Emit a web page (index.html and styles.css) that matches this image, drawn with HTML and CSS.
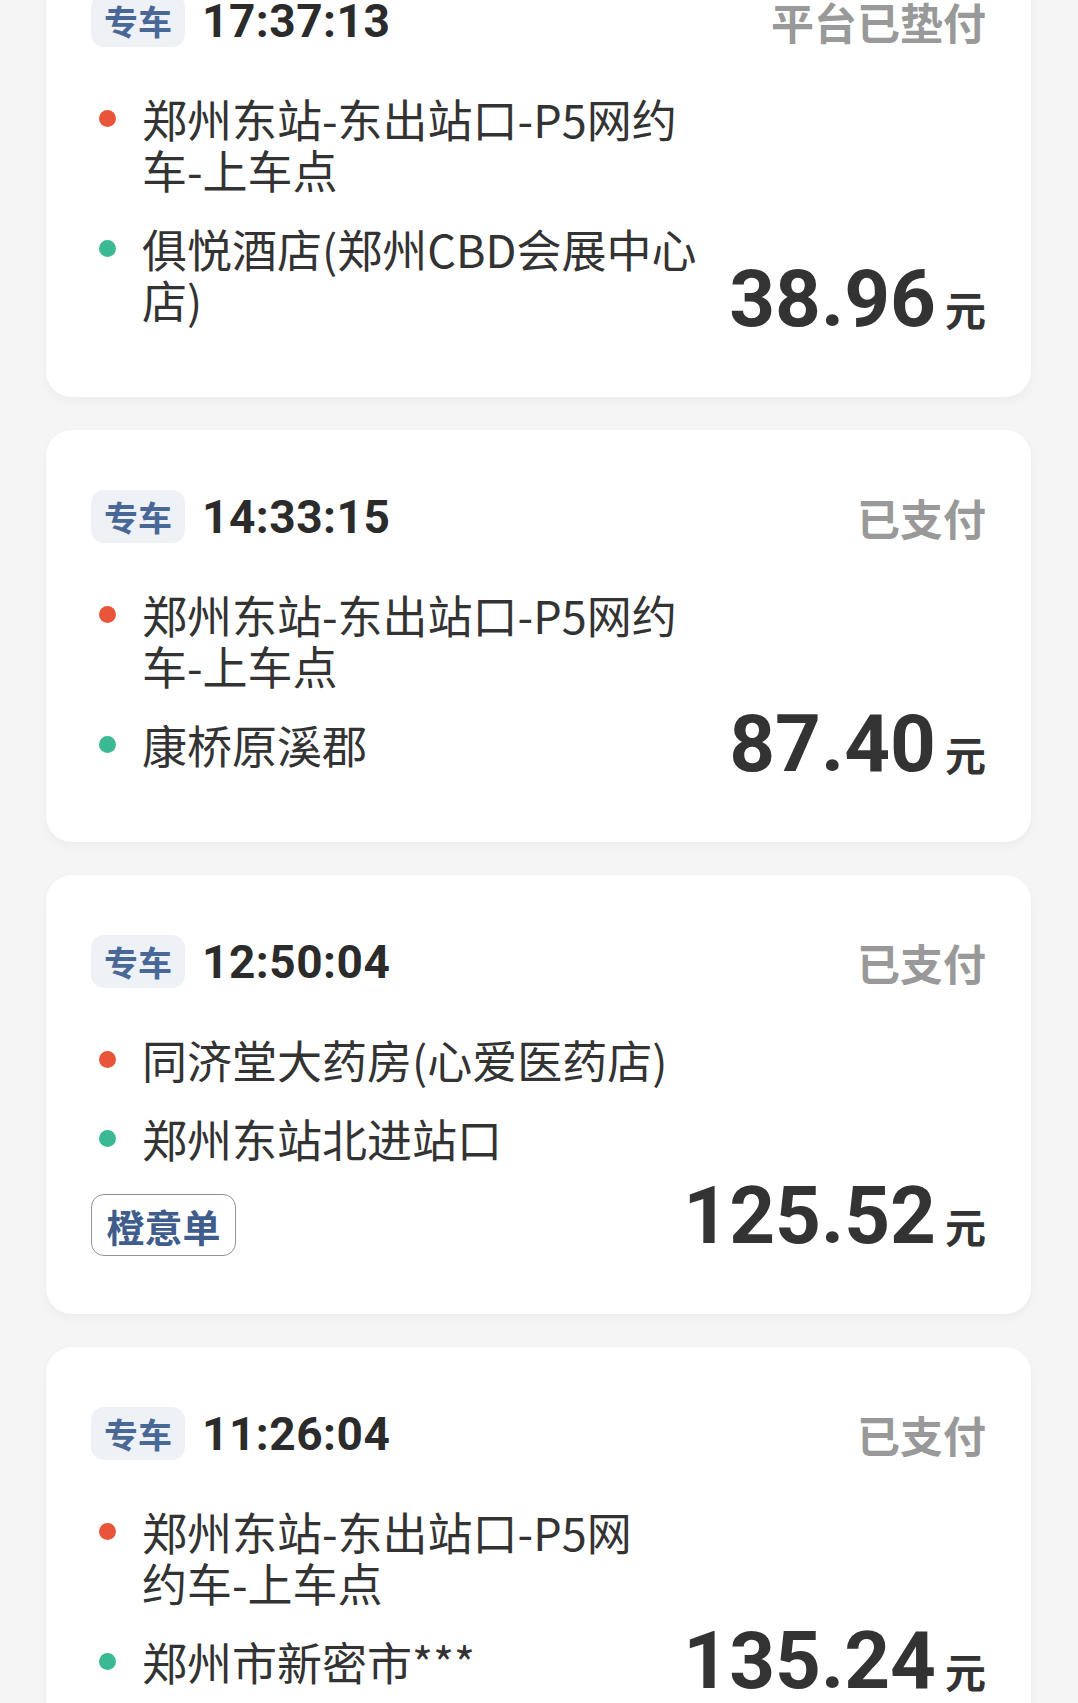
FILE: index.html
```html
<!DOCTYPE html>
<html lang="zh-CN">
<head>
    <meta charset="utf-8">
    <title>行程订单</title>
    <link rel="stylesheet" href="styles.css">
</head>
<body>
    <div class="order-list">

    <div class="card">
        <div class="card-head">
            <span class="car-type">专车</span>
            <span class="time">17:37:13</span>
            <span class="status">平台已垫付</span>
        </div>
        <div class="card-body">
            <div class="route">
                <div class="stop start">郑州东站-东出站口-P5网约车-上车点</div>
                <div class="stop end">俱悦酒店(郑州CBD会展中心店)</div>
            </div>
            <div class="fare"><span class="amount">38.96</span><span class="unit">元</span></div>
        </div>
    </div>

    <div class="card">
        <div class="card-head">
            <span class="car-type">专车</span>
            <span class="time">14:33:15</span>
            <span class="status">已支付</span>
        </div>
        <div class="card-body">
            <div class="route">
                <div class="stop start">郑州东站-东出站口-P5网约车-上车点</div>
                <div class="stop end">康桥原溪郡</div>
            </div>
            <div class="fare"><span class="amount">87.40</span><span class="unit">元</span></div>
        </div>
    </div>

    <div class="card">
        <div class="card-head">
            <span class="car-type">专车</span>
            <span class="time">12:50:04</span>
            <span class="status">已支付</span>
        </div>
        <div class="card-body">
            <div class="route">
                <div class="stop start">同济堂大药房(心爱医药店)</div>
                <div class="stop end">郑州东站北进站口</div>
                <span class="order-tag">橙意单</span>
            </div>
            <div class="fare"><span class="amount">125.52</span><span class="unit">元</span></div>
        </div>
    </div>

    <div class="card">
        <div class="card-head">
            <span class="car-type">专车</span>
            <span class="time">11:26:04</span>
            <span class="status">已支付</span>
        </div>
        <div class="card-body">
            <div class="route">
                <div class="stop start">郑州东站-东出站口-P5网约车-上车点</div>
                <div class="stop end">郑州市新密市***</div>
            </div>
            <div class="fare"><span class="amount">135.24</span><span class="unit">元</span></div>
        </div>
    </div>

    </div>
</body>
</html>
```

FILE: styles.css
```css
* {
    box-sizing: border-box;
}
body {
    margin: 0;
    background: #f5f5f5;
    font-family: "Noto Sans CJK SC", "Noto Sans", sans-serif;
    color: #333;
}
.order-list {
    display: flex;
    flex-direction: column;
    gap: 33px;
    margin-top: -66px;
    padding: 0 47px 40px 46px;
}
.card {
    background: #fff;
    border-radius: 26px;
    padding: 60px 45px 58px 45px;
    box-shadow: 0 4px 10px rgba(0, 0, 0, 0.04);
}
.card-head {
    display: flex;
    align-items: center;
    height: 53px;
}
.car-type {
    display: flex;
    align-items: center;
    justify-content: center;
    width: 94px;
    height: 53px;
    border-radius: 13px;
    background: #eef2f7;
    color: #4a6896;
    font-size: 34px;
    font-weight: 700;
}
.time {
    margin-left: 17px;
    font-family: Roboto, "Liberation Sans", sans-serif;
    font-weight: 700;
    font-size: 46px;
    color: #2b2b2b;
    letter-spacing: 0.5px;
}
.status {
    margin-left: auto;
    font-size: 43px;
    font-weight: 700;
    color: #999;
}
.card-body {
    display: flex;
    align-items: flex-end;
    gap: 12px;
}
.route {
    flex: 1;
    margin-top: 32px;
}
.stop {
    position: relative;
    padding: 14px 0 14px 51px;
    font-size: 45px;
    line-height: 51px;
    color: #333;
}
.stop::before {
    content: "";
    position: absolute;
    left: 8px;
    top: 31px;
    width: 17px;
    height: 17px;
    border-radius: 50%;
}
.stop.start::before { background: #e8553a; }
.stop.end::before { background: #3bb894; }
.order-tag {
    display: inline-flex;
    align-items: center;
    justify-content: center;
    margin-top: 16px;
    width: 145px;
    height: 62px;
    border: 1.5px solid #8d939c;
    border-radius: 13px;
    color: #3f5d8c;
    font-size: 38px;
    font-weight: 700;
}
.fare {
    display: flex;
    align-items: baseline;
    margin-bottom: -9px;
    line-height: 80px;
    white-space: nowrap;
}
.amount {
    font-family: Roboto, "Liberation Sans", sans-serif;
    font-weight: 700;
    font-size: 80px;
    color: #333;
}
.unit {
    margin-left: 9px;
    font-size: 41px;
    font-weight: 700;
    color: #333;
}
```
